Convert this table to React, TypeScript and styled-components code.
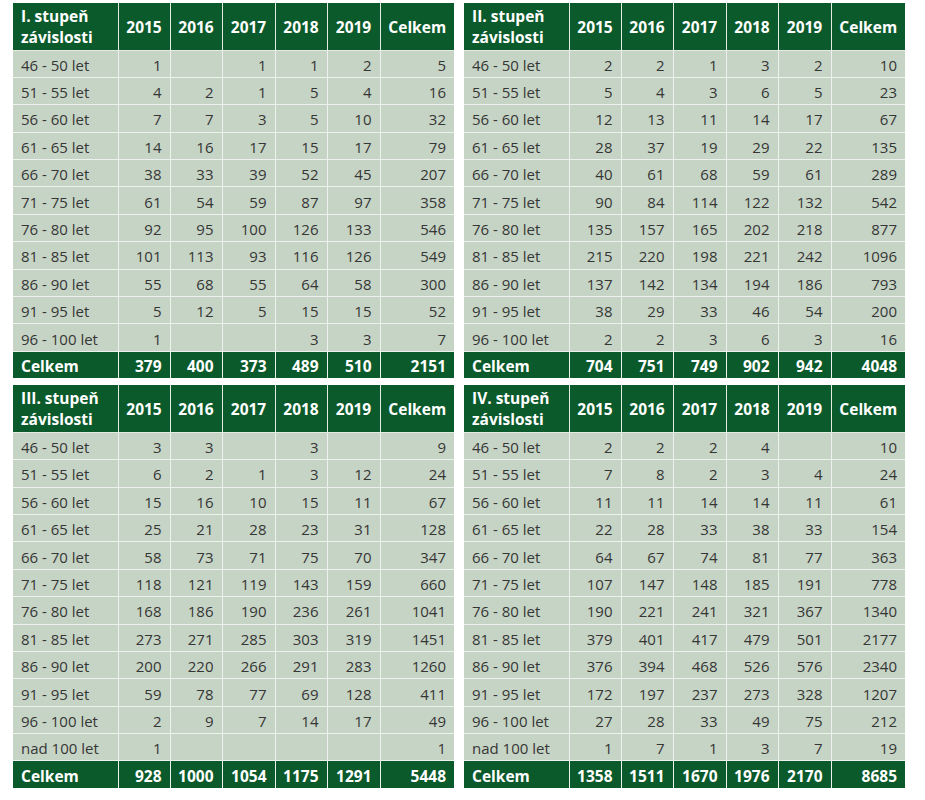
import React from "react";
import styled, { createGlobalStyle } from "styled-components";

const Global = createGlobalStyle`
  html, body { margin: 0; padding: 0; background: #ffffff; }
  body { font-family: "Open Sans", "Noto Sans", sans-serif; }
`;

type Row = { label: string; values: (number | "")[] };
type TableData = { title: [string, string]; rows: Row[]; total: number[] };

const labels11 = [
  "46 - 50 let", "51 - 55 let", "56 - 60 let", "61 - 65 let", "66 - 70 let",
  "71 - 75 let", "76 - 80 let", "81 - 85 let", "86 - 90 let", "91 - 95 let", "96 - 100 let",
];
const labels12 = [...labels11, "nad 100 let"];

const mk = (labels: string[], vals: (number | "")[][]): Row[] =>
  labels.map((label, i) => ({ label, values: vals[i] }));

const tables: TableData[] = [
  {
    title: ["I. stupeň", "závislosti"],
    rows: mk(labels11, [
      [1, "", 1, 1, 2, 5],
      [4, 2, 1, 5, 4, 16],
      [7, 7, 3, 5, 10, 32],
      [14, 16, 17, 15, 17, 79],
      [38, 33, 39, 52, 45, 207],
      [61, 54, 59, 87, 97, 358],
      [92, 95, 100, 126, 133, 546],
      [101, 113, 93, 116, 126, 549],
      [55, 68, 55, 64, 58, 300],
      [5, 12, 5, 15, 15, 52],
      [1, "", "", 3, 3, 7],
    ]),
    total: [379, 400, 373, 489, 510, 2151],
  },
  {
    title: ["II. stupeň", "závislosti"],
    rows: mk(labels11, [
      [2, 2, 1, 3, 2, 10],
      [5, 4, 3, 6, 5, 23],
      [12, 13, 11, 14, 17, 67],
      [28, 37, 19, 29, 22, 135],
      [40, 61, 68, 59, 61, 289],
      [90, 84, 114, 122, 132, 542],
      [135, 157, 165, 202, 218, 877],
      [215, 220, 198, 221, 242, 1096],
      [137, 142, 134, 194, 186, 793],
      [38, 29, 33, 46, 54, 200],
      [2, 2, 3, 6, 3, 16],
    ]),
    total: [704, 751, 749, 902, 942, 4048],
  },
  {
    title: ["III. stupeň", "závislosti"],
    rows: mk(labels12, [
      [3, 3, "", 3, "", 9],
      [6, 2, 1, 3, 12, 24],
      [15, 16, 10, 15, 11, 67],
      [25, 21, 28, 23, 31, 128],
      [58, 73, 71, 75, 70, 347],
      [118, 121, 119, 143, 159, 660],
      [168, 186, 190, 236, 261, 1041],
      [273, 271, 285, 303, 319, 1451],
      [200, 220, 266, 291, 283, 1260],
      [59, 78, 77, 69, 128, 411],
      [2, 9, 7, 14, 17, 49],
      [1, "", "", "", "", 1],
    ]),
    total: [928, 1000, 1054, 1175, 1291, 5448],
  },
  {
    title: ["IV. stupeň", "závislosti"],
    rows: mk(labels12, [
      [2, 2, 2, 4, "", 10],
      [7, 8, 2, 3, 4, 24],
      [11, 11, 14, 14, 11, 61],
      [22, 28, 33, 38, 33, 154],
      [64, 67, 74, 81, 77, 363],
      [107, 147, 148, 185, 191, 778],
      [190, 221, 241, 321, 367, 1340],
      [379, 401, 417, 479, 501, 2177],
      [376, 394, 468, 526, 576, 2340],
      [172, 197, 237, 273, 328, 1207],
      [27, 28, 33, 49, 75, 212],
      [1, 7, 1, 3, 7, 19],
    ]),
    total: [1358, 1511, 1670, 1976, 2170, 8685],
  },
];

const years = ["2015", "2016", "2017", "2018", "2019"];
const colWidths = [105, 52, 52, 53, 52, 53, 74];

const Page = styled.div`
  display: grid;
  grid-template-columns: 441px 441px;
  column-gap: 10px;
  row-gap: 7px;
  padding: 3px 0 0 13px;
`;

const Table = styled.table`
  border-collapse: collapse;
  table-layout: fixed;
  width: 441px;
  font-size: 15px;
  color: #363636;
`;

const Col = styled.col<{ $w: number }>`
  width: ${(p) => p.$w}px;
`;

const HeadRow = styled.tr`
  height: 47px;
  background: #0b5a2c;
`;

const HeadCell = styled.th<{ $left?: boolean }>`
  border: 1px solid #e3ebe3;
  border-top: none;
  color: #ffffff;
  font-weight: 700;
  font-size: 15.5px;
  line-height: 21px;
  text-align: ${(p) => (p.$left ? "left" : "center")};
  padding: ${(p) => (p.$left ? "1px 2px 0 8px" : "2px 0 0 0")};
  white-space: nowrap;
  &:first-child { border-left: none; }
  &:last-child { border-right: none; }
`;

const DataRow = styled.tr`
  height: 27.4px;
  background: #c6d4c5;
`;

const TotalRow = styled.tr`
  height: 27px;
  background: #0b5a2c;
`;

const Cell = styled.td<{ $left?: boolean; $bold?: boolean }>`
  border: 1px solid #eef2ee;
  padding: ${(p) => (p.$left ? "2px 2px 0 8px" : "2px 8px 0 0")};
  line-height: 20px;
  text-align: ${(p) => (p.$left ? "left" : "right")};
  font-weight: ${(p) => (p.$bold ? 700 : 400)};
  font-size: ${(p) => (p.$bold ? "15.5px" : "15px")};
  color: ${(p) => (p.$bold ? "#ffffff" : "#363636")};
  white-space: nowrap;
  &:first-child { border-left: none; }
  &:last-child { border-right: none; }
`;

const TotalCell = styled(Cell)`
  border-bottom: none;
`;

function DataTable({ data }: { data: TableData }) {
  return (
    <Table>
      <colgroup>
        {colWidths.map((w, i) => (
          <Col key={i} $w={w} />
        ))}
      </colgroup>
      <thead>
        <HeadRow>
          <HeadCell $left>
            {data.title[0]}
            <br />
            {data.title[1]}
          </HeadCell>
          {years.map((y) => (
            <HeadCell key={y}>{y}</HeadCell>
          ))}
          <HeadCell>Celkem</HeadCell>
        </HeadRow>
      </thead>
      <tbody>
        {data.rows.map((r) => (
          <DataRow key={r.label}>
            <Cell $left>{r.label}</Cell>
            {r.values.map((v, i) => (
              <Cell key={i}>{v}</Cell>
            ))}
          </DataRow>
        ))}
        <TotalRow>
          <TotalCell $left $bold>Celkem</TotalCell>
          {data.total.map((v, i) => (
            <TotalCell key={i} $bold>{v}</TotalCell>
          ))}
        </TotalRow>
      </tbody>
    </Table>
  );
}

export default function App() {
  return (
    <>
      <Global />
      <Page>
        {tables.map((t) => (
          <DataTable key={t.title[0]} data={t} />
        ))}
      </Page>
    </>
  );
}
